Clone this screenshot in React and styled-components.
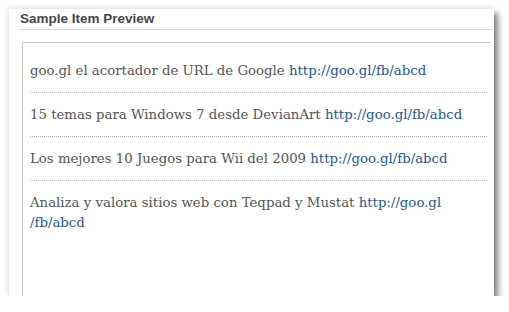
import React from "react";
import styled, { createGlobalStyle } from "styled-components";

const GlobalStyle = createGlobalStyle`
  html, body {
    margin: 0;
    padding: 0;
    background: #fff;
  }
`;

const Panel = styled.div`
  margin: 9px 0 0 9px;
  width: 485px;
  height: 287px;
  background: #fff;
  box-shadow: 4px 4px 6px rgba(0, 0, 0, 0.5), -2px -2px 6px rgba(0, 0, 0, 0.08);
  display: flex;
  flex-direction: column;
  overflow: hidden;
`;

const Header = styled.div`
  margin: 0 1px 0 10px;
  padding: 2px 0 0 1px;
  height: 18px;
  border-bottom: 1px solid #d6d6d6;
  font-family: "Liberation Sans", Arial, sans-serif;
  font-weight: bold;
  font-size: 13.5px;
  line-height: 16px;
  color: #474747;
`;

const Frame = styled.div`
  flex: 1;
  margin: 12px 3px 0 13px;
  padding: 6px 4px 0 7px;
  border-top: 1px solid #c8c8c8;
  border-left: 1px solid #c8c8c8;
`;

const Item = styled.div`
  padding: 12px 0 11px;
  border-bottom: ${(p) => (p.last ? "none" : "1px dotted #b8b8b8")};
  font-family: "DejaVu Serif", Georgia, serif;
  font-size: 13.3px;
  line-height: 20px;
  color: #555;
`;

const Link = styled.a`
  color: #1b5894;
  text-decoration: none;
`;

const items = [
  "goo.gl el acortador de URL de Google",
  "15 temas para Windows 7 desde DevianArt",
  "Los mejores 10 Juegos para Wii del 2009",
];

export default function App() {
  return (
    <>
      <GlobalStyle />
      <Panel>
        <Header>Sample Item Preview</Header>
        <Frame>
          {items.map((t) => (
            <Item key={t}>
              {t} <Link href="#">http://goo.gl/fb/abcd</Link>
            </Item>
          ))}
          <Item last>
            Analiza y valora sitios web con Teqpad y Mustat{" "}
            <Link href="#">
              http://goo.gl
              <br />
              /fb/abcd
            </Link>
          </Item>
        </Frame>
      </Panel>
    </>
  );
}
